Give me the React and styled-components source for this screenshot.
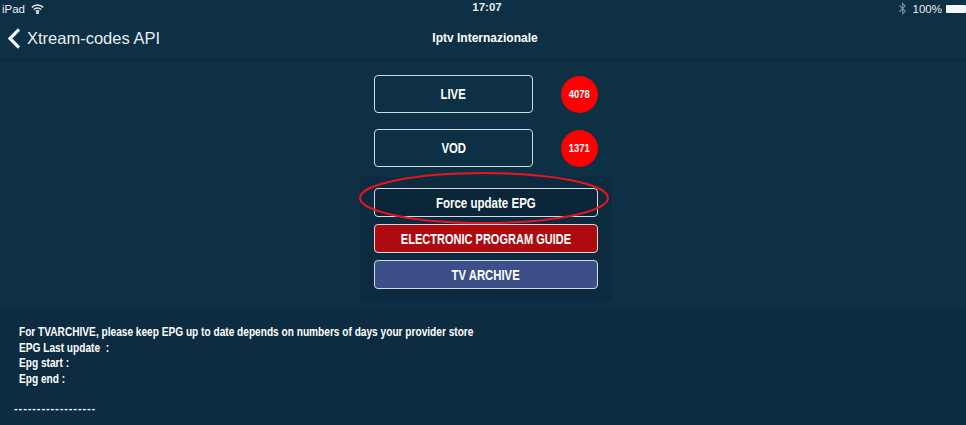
import styled, { createGlobalStyle } from "styled-components";
import { FaBluetoothB } from "react-icons/fa";

const GlobalStyle = createGlobalStyle`
  html, body {
    margin: 0;
    padding: 0;
    background: #0e3045;
  }
`;

const Page = styled.div`
  width: 966px;
  height: 425px;
  overflow: hidden;
  display: flex;
  flex-direction: column;
  background: #0e3045;
  color: #fff;
  font-family: "Liberation Sans", Arial, sans-serif;
`;

const StatusBar = styled.div`
  height: 17px;
  padding: 0 2px;
  display: flex;
  align-items: center;
  justify-content: space-between;
  font-size: 11.5px;
  position: relative;
  color: #e8edf0;
`;

const StatusGroup = styled.div`
  display: flex;
  align-items: center;
  gap: ${(p) => p.$gap || 5}px;
`;

const Clock = styled.div`
  position: absolute;
  left: 8px;
  right: 0;
  top: 1px;
  text-align: center;
  font-weight: 700;
  font-size: 11.5px;
`;

const Battery = styled.div`
  width: 20px;
  height: 8px;
  background: #f2f4f5;
  border-radius: 1px;
  margin-right: -2px;
`;

const NavBar = styled.div`
  height: 42px;
  position: relative;
  display: flex;
  align-items: center;
  border-bottom: 1px solid #0b2739;
`;

const Back = styled.div`
  display: flex;
  align-items: center;
  gap: 6px;
  padding-left: 7px;
  font-size: 16.5px;
  color: #e8edf0;
`;

const NavTitle = styled.div`
  position: absolute;
  left: 4px;
  right: 0;
  text-align: center;
  font-weight: 700;
  font-size: 12px;
`;

const Main = styled.div`
  height: 249px;
  box-sizing: border-box;
  padding: 15px 0 0 6px;
  display: flex;
  flex-direction: column;
  align-items: center;
`;

const Row = styled.div`
  width: 224px;
  margin-bottom: 16px;
  display: flex;
  align-items: center;
  justify-content: space-between;
`;

const Button = styled.div`
  box-sizing: border-box;
  width: ${(p) => p.$width || 224}px;
  height: ${(p) => p.$height || 29}px;
  border: 1px solid #d4dde2;
  border-radius: 4px;
  background: ${(p) => p.$bg || "transparent"};
  display: flex;
  align-items: center;
  justify-content: center;
  font-weight: 700;
  font-size: 14.5px;
`;

// the reference font is a narrow bold, Liberation is squeezed to its width
const Narrow = styled.span`
  display: inline-block;
  white-space: nowrap;
  transform: scaleX(${(p) => p.$x || 0.78});
`;

const Badge = styled.div`
  width: 37px;
  height: 37px;
  border-radius: 50%;
  background: #fe0000;
  display: flex;
  align-items: center;
  justify-content: center;
  font-weight: 700;
  font-size: 11px;
`;

const Panel = styled.div`
  position: relative;
  width: 252px;
  height: 124px;
  box-sizing: border-box;
  margin-top: -6px;
  padding: 11px 14px;
  display: flex;
  flex-direction: column;
  gap: 7px;
  background: #0c2b3f;
`;

const Ellipse = styled.svg`
  position: absolute;
  left: 0;
  top: -6px;
  overflow: visible;
`;

const Footer = styled.div`
  flex: 1;
  background: #0d2c41;
  padding: 16px 0 0 19px;
  font-weight: 700;
  font-size: 12.5px;
  line-height: 15.7px;
`;

const FooterLine = styled.div`
  white-space: nowrap;
  transform: scaleX(0.81);
  transform-origin: left center;
`;

const Dashes = styled.div`
  margin: 13px 0 0 -5px;
  letter-spacing: 0.9px;
  font-size: 11px;
`;

export default function App() {
  return (
    <Page>
      <GlobalStyle />
      <StatusBar>
        <StatusGroup $gap={6}>
          <span>iPad</span>
          <svg width="13" height="10" viewBox="0 0 13 10" fill="none" stroke="#e8edf0" strokeWidth="1.5">
            <path d="M.8 3.4a8 8 0 0 1 11.4 0" />
            <path d="M2.8 5.5a5.2 5.2 0 0 1 7.4 0" />
            <path d="M4.8 7.4a2.4 2.4 0 0 1 3.4 0" />
            <circle cx="6.5" cy="8.9" r=".6" fill="#e8edf0" />
          </svg>
        </StatusGroup>
        <Clock>17:07</Clock>
        <StatusGroup $gap={4}>
          <FaBluetoothB size={13} color="#7d8f9b" />
          <span>100%</span>
          <Battery />
        </StatusGroup>
      </StatusBar>
      <NavBar>
        <Back>
          <svg width="14" height="21" viewBox="0 0 14 21" fill="none" stroke="#f2f4f5" strokeWidth="3.2">
            <path d="M12 1.4 3 10.5l9 9.1" />
          </svg>
          <span>Xtream-codes API</span>
        </Back>
        <NavTitle>Iptv Internazionale</NavTitle>
      </NavBar>
      <Main>
        <Row>
          <Button $width={159} $height={38}><Narrow>LIVE</Narrow></Button>
          <Badge><Narrow $x={0.86}>4078</Narrow></Badge>
        </Row>
        <Row>
          <Button $width={159} $height={38}><Narrow>VOD</Narrow></Button>
          <Badge><Narrow $x={0.86}>1371</Narrow></Badge>
        </Row>
        <Panel>
          <Button $bg="#0b2639"><Narrow $x={0.795}>Force update EPG</Narrow></Button>
          <Button $bg="#ad0b10"><Narrow $x={0.76}>ELECTRONIC PROGRAM GUIDE</Narrow></Button>
          <Button $bg="#3c4f88"><Narrow $x={0.78}>TV ARCHIVE</Narrow></Button>
          <Ellipse width="252" height="60" viewBox="0 0 252 60" fill="none">
            <ellipse cx="124" cy="27" rx="124" ry="25" stroke="#e8141c" strokeWidth="2" />
          </Ellipse>
        </Panel>
      </Main>
      <Footer>
        <FooterLine>For TVARCHIVE, please keep EPG up to date depends on numbers of days your provider store</FooterLine>
        <FooterLine>EPG Last update &nbsp;:</FooterLine>
        <FooterLine>Epg start :</FooterLine>
        <FooterLine>Epg end :</FooterLine>
        <Dashes>------------------</Dashes>
      </Footer>
    </Page>
  );
}
